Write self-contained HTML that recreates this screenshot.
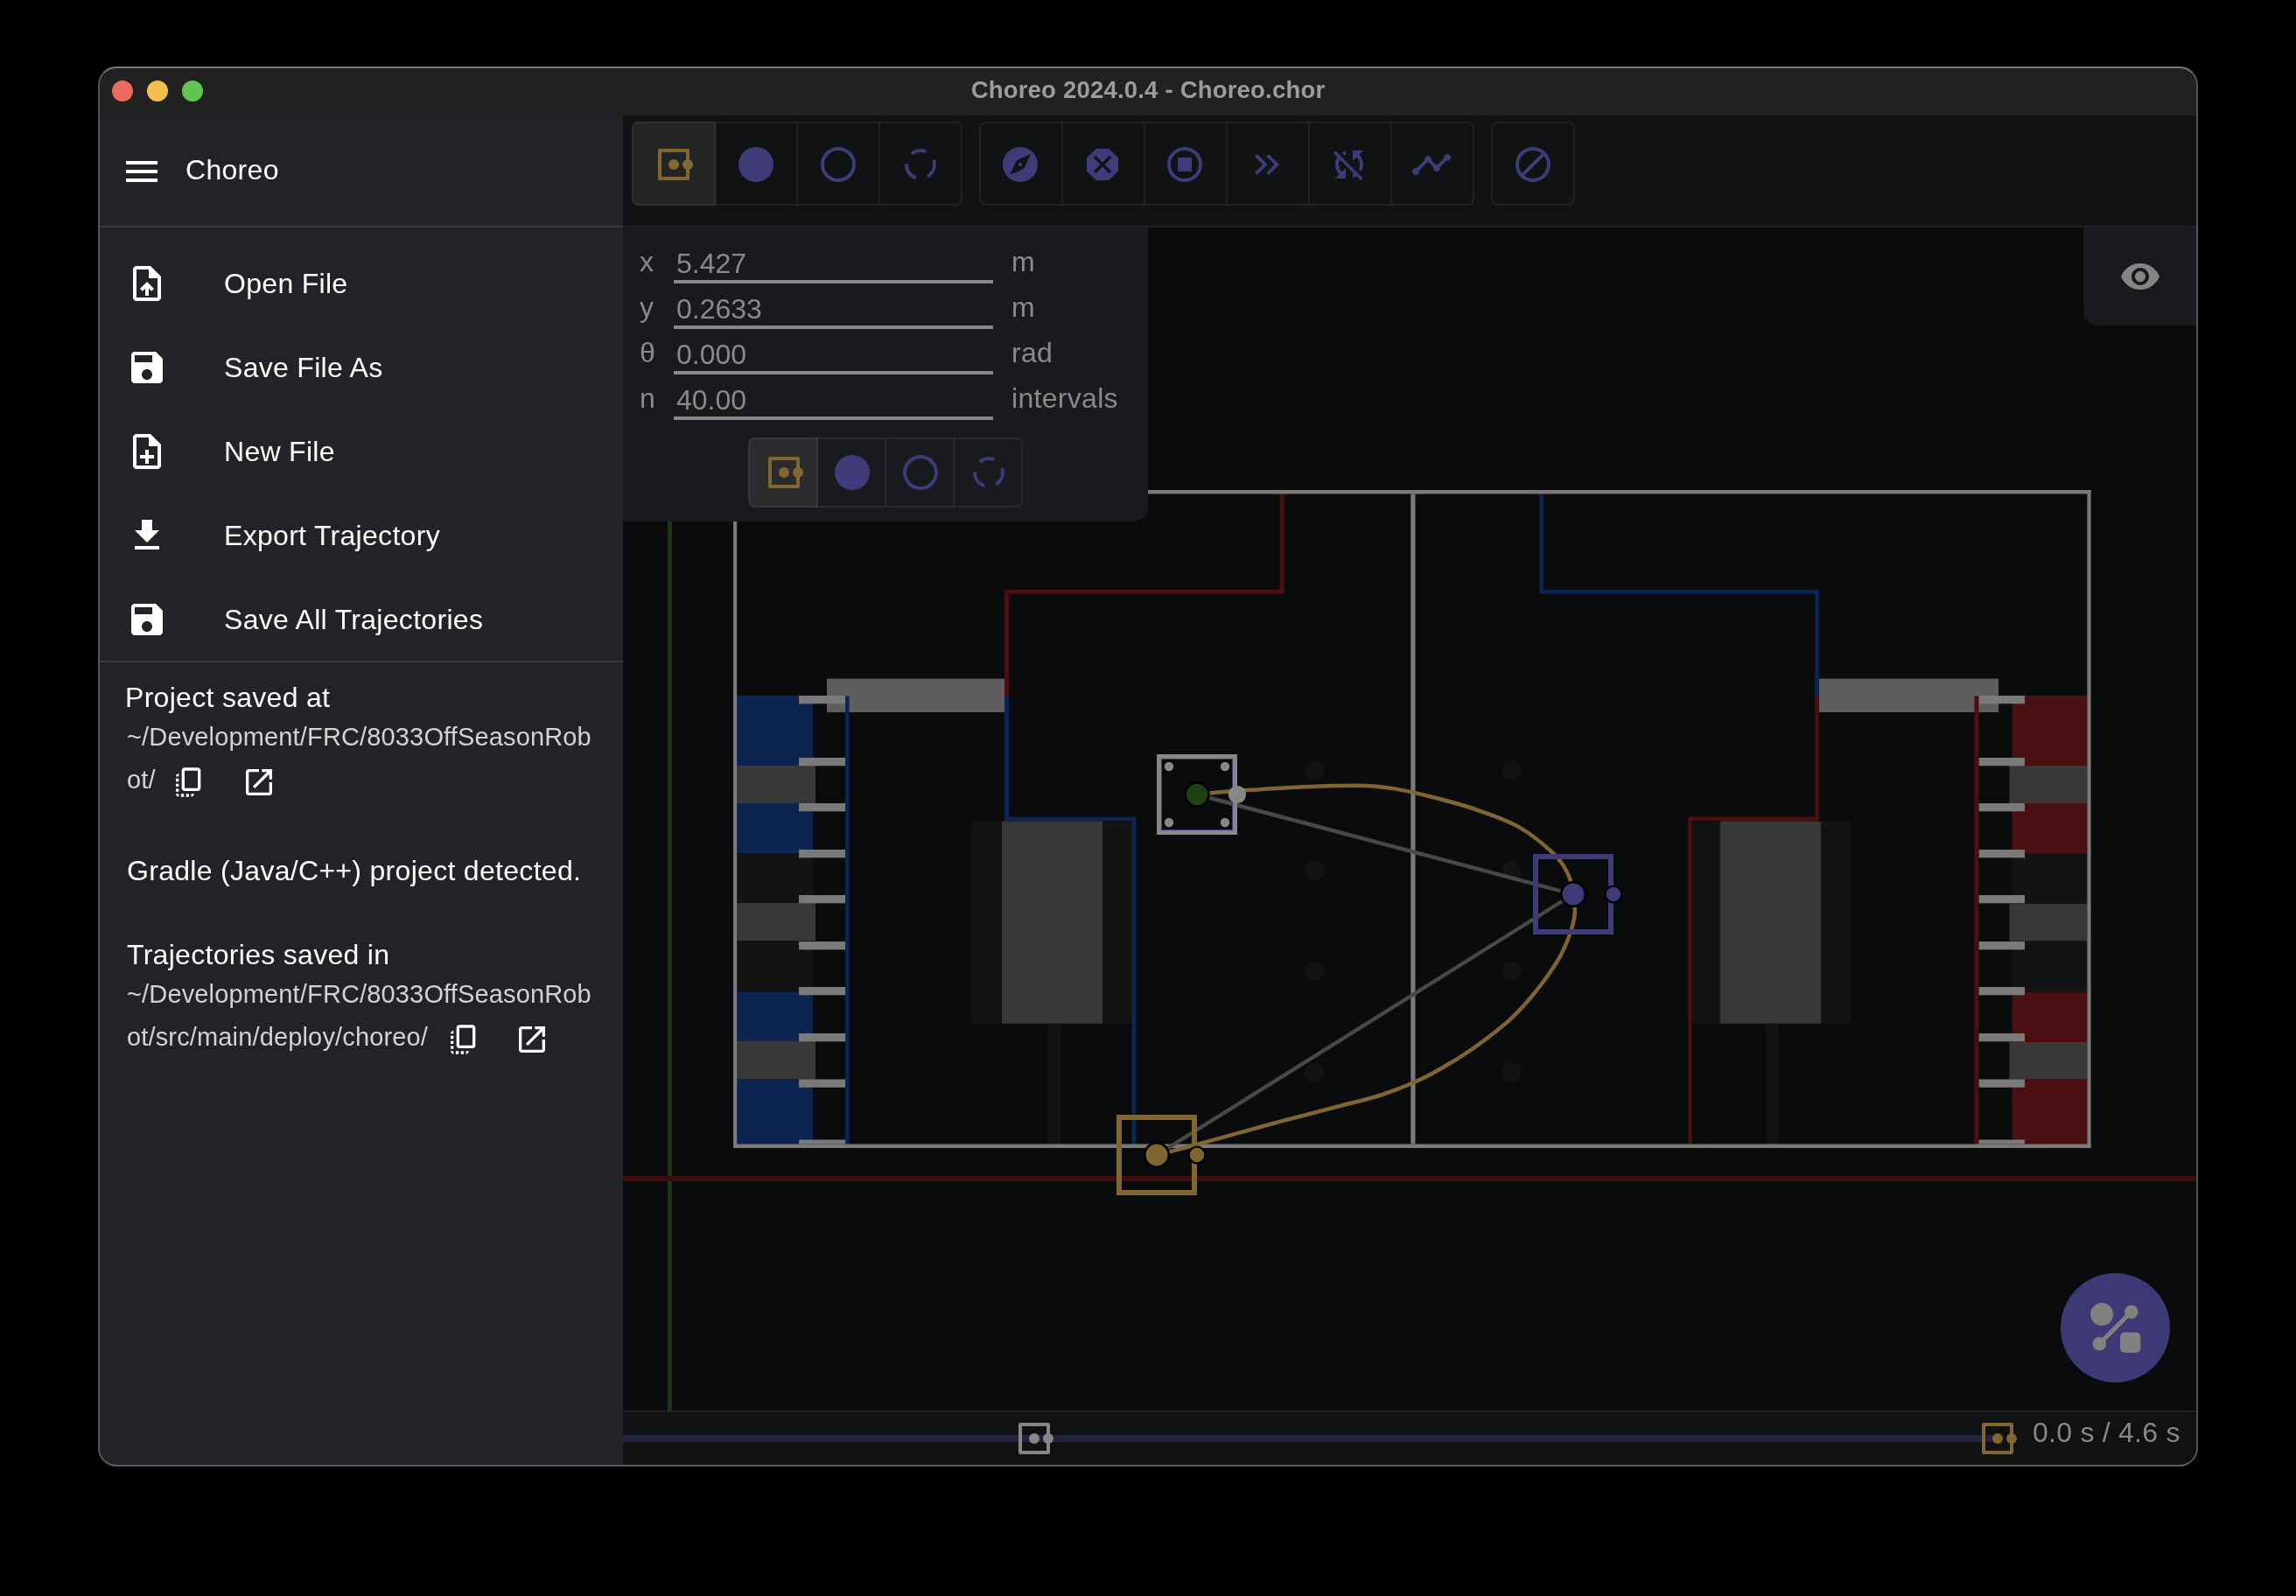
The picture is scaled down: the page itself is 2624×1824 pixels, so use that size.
<!DOCTYPE html>
<html><head><meta charset="utf-8">
<style>
html,body{margin:0;padding:0;background:#000;width:2624px;height:1824px;overflow:hidden;}
body{font-family:"Liberation Sans",sans-serif;position:relative;}
.win{position:absolute;left:112px;top:76px;width:2400px;height:1600px;border-radius:21px;overflow:hidden;background:#222327;}
.pg{position:absolute;left:-112px;top:-76px;width:2624px;height:1824px;}
.frame{position:absolute;left:112px;top:76px;width:2400px;height:1600px;border-radius:21px;box-sizing:border-box;border:2px solid #525355;border-top-color:#767676;border-bottom-color:#5a5b5e;pointer-events:none;}
.a{position:absolute;white-space:nowrap;}
.t{position:absolute;white-space:nowrap;line-height:1;will-change:transform;}
svg{position:absolute;overflow:visible;}
</style></head><body>
<div class="win"><div class="pg">

<!-- title bar -->
<div class="a" style="left:112px;top:76px;width:2400px;height:56px;background:#212121;"></div>
<div class="a" style="left:128px;top:92px;width:24px;height:24px;border-radius:50%;background:#ec6a5e;"></div>
<div class="a" style="left:168px;top:92px;width:24px;height:24px;border-radius:50%;background:#f4bf4f;"></div>
<div class="a" style="left:208px;top:92px;width:24px;height:24px;border-radius:50%;background:#61c554;"></div>
<div class="t" style="left:1012px;width:600px;text-align:center;top:89px;font-size:27.5px;font-weight:bold;color:#9c9c9c;letter-spacing:0.2px;">Choreo 2024.0.4 - Choreo.chor</div>

<!-- sidebar -->
<div class="a" style="left:112px;top:132px;width:600px;height:1544px;background:#222327;"></div>
<svg style="left:138px;top:172px" width="48" height="48" viewBox="0 0 24 24"><path fill="#fff" d="M3 18h18v-2H3v2zm0-5h18v-2H3v2zm0-7v2h18V6H3z"/></svg>
<div class="t" style="left:212px;top:178px;font-size:32px;color:#fff;letter-spacing:0.3px;">Choreo</div>
<div class="a" style="left:112px;top:258px;width:600px;height:2px;background:#3a3b3f;"></div>

<svg style="left:144px;top:300px" width="48" height="48" viewBox="0 0 24 24"><path fill="#fff" d="M14 2H6c-1.1 0-1.99.9-1.99 2L4 20c0 1.1.89 2 1.99 2H18c1.1 0 2-.9 2-2V8l-6-6zm4 18H6V4h7v5h5v11zM8 15.01l1.41 1.41L11 14.84V19h2v-4.16l1.59 1.59L16 15.01 12.01 11 8 15.01z"/></svg>
<div class="t" style="left:256px;top:307.5px;font-size:32px;color:#fff;letter-spacing:0.3px;">Open File</div>
<svg style="left:144px;top:396px" width="48" height="48" viewBox="0 0 24 24"><path fill="#fff" d="M17 3H5c-1.11 0-2 .9-2 2v14c0 1.1.89 2 2 2h14c1.1 0 2-.9 2-2V7l-4-4zm-5 16c-1.66 0-3-1.34-3-3s1.34-3 3-3 3 1.34 3 3-1.34 3-3 3zm3-10H5V5h10v4z"/></svg>
<div class="t" style="left:256px;top:403.5px;font-size:32px;color:#fff;letter-spacing:0.3px;">Save File As</div>
<svg style="left:144px;top:492px" width="48" height="48" viewBox="0 0 24 24"><path fill="#fff" d="M13 11h-2v3H8v2h3v3h2v-3h3v-2h-3zm1-9H6c-1.1 0-2 .9-2 2v16c0 1.1.89 2 1.99 2H18c1.1 0 2-.9 2-2V8l-6-6zm4 18H6V4h7v5h5v11z"/></svg>
<div class="t" style="left:256px;top:499.5px;font-size:32px;color:#fff;letter-spacing:0.3px;">New File</div>
<svg style="left:144px;top:588px" width="48" height="48" viewBox="0 0 24 24"><path fill="#fff" d="M5 20h14v-2H5v2zM19 9h-4V3H9v6H5l7 7 7-7z"/></svg>
<div class="t" style="left:256px;top:595.5px;font-size:32px;color:#fff;letter-spacing:0.3px;">Export Trajectory</div>
<svg style="left:144px;top:684px" width="48" height="48" viewBox="0 0 24 24"><path fill="#fff" d="M17 3H5c-1.11 0-2 .9-2 2v14c0 1.1.89 2 2 2h14c1.1 0 2-.9 2-2V7l-4-4zm-5 16c-1.66 0-3-1.34-3-3s1.34-3 3-3 3 1.34 3 3-1.34 3-3 3zm3-10H5V5h10v4z"/></svg>
<div class="t" style="left:256px;top:691.5px;font-size:32px;color:#fff;letter-spacing:0.3px;">Save All Trajectories</div>
<div class="a" style="left:112px;top:755px;width:600px;height:2px;background:#3a3b3f;"></div>

<div class="t" style="left:142.5px;top:780.7px;font-size:32px;color:#fff;letter-spacing:0.3px;">Project saved at</div>
<div class="t" style="left:144.5px;top:827.5px;font-size:29px;color:#d2d2d2;letter-spacing:0.15px;">~/Development/FRC/8033OffSeasonRob</div>
<div class="t" style="left:144.5px;top:876.5px;font-size:29px;color:#d2d2d2;letter-spacing:0.15px;">ot/</div>
<svg style="left:196px;top:874px" width="40" height="40" viewBox="0 0 24 24"><path fill="#fff" d="M18 2H9c-1.1 0-2 .9-2 2v12c0 1.1.9 2 2 2h9c1.1 0 2-.9 2-2V4c0-1.1-.9-2-2-2zm0 14H9V4h9v12zM3 15v-2h2v2H3zm0-5.5h2v2H3v-2zM10 20h2v2h-2v-2zm-7-1.5v-2h2v2H3zM5 22c-1.1 0-2-.9-2-2h2v2zm3.5 0h-2v-2h2v2zm5 0v-2h2c0 1.1-.9 2-2 2zM5 6v2H3c0-1.1.9-2 2-2z"/></svg>
<svg style="left:276px;top:874px" width="40" height="40" viewBox="0 0 24 24"><path fill="#fff" d="M19 19H5V5h7V3H5c-1.11 0-2 .9-2 2v14c0 1.1.89 2 2 2h14c1.1 0 2-.9 2-2v-7h-2v7zM14 3v2h3.59l-9.83 9.83 1.41 1.41L19 6.41V10h2V3h-7z"/></svg>

<div class="t" style="left:144.5px;top:979.4px;font-size:32px;color:#fff;letter-spacing:0.3px;">Gradle (Java/C++) project detected.</div>
<div class="t" style="left:144.5px;top:1075.3px;font-size:32px;color:#fff;letter-spacing:0.3px;">Trajectories saved in</div>
<div class="t" style="left:144.5px;top:1121.5px;font-size:29px;color:#d2d2d2;letter-spacing:0.15px;">~/Development/FRC/8033OffSeasonRob</div>
<div class="t" style="left:144.5px;top:1170.5px;font-size:29px;color:#d2d2d2;letter-spacing:0.15px;">ot/src/main/deploy/choreo/</div>
<svg style="left:510px;top:1168px" width="40" height="40" viewBox="0 0 24 24"><path fill="#fff" d="M18 2H9c-1.1 0-2 .9-2 2v12c0 1.1.9 2 2 2h9c1.1 0 2-.9 2-2V4c0-1.1-.9-2-2-2zm0 14H9V4h9v12zM3 15v-2h2v2H3zm0-5.5h2v2H3v-2zM10 20h2v2h-2v-2zm-7-1.5v-2h2v2H3zM5 22c-1.1 0-2-.9-2-2h2v2zm3.5 0h-2v-2h2v2zm5 0v-2h2c0 1.1-.9 2-2 2zM5 6v2H3c0-1.1.9-2 2-2z"/></svg>
<svg style="left:588px;top:1168px" width="40" height="40" viewBox="0 0 24 24"><path fill="#fff" d="M19 19H5V5h7V3H5c-1.11 0-2 .9-2 2v14c0 1.1.89 2 2 2h14c1.1 0 2-.9 2-2v-7h-2v7zM14 3v2h3.59l-9.83 9.83 1.41 1.41L19 6.41V10h2V3h-7z"/></svg>

<!-- MAIN -->
<div class="a" style="left:712px;top:132px;width:1800px;height:126px;background:#111214;"></div>
<div class="a" style="left:712px;top:258px;width:1800px;height:2px;background:#1f2023;"></div>
<div class="a" style="left:712px;top:260px;width:1800px;height:1352px;background:#0a0b0d;"></div>
<div class="a" style="left:722px;top:139px;width:96px;height:96px;box-sizing:border-box;border:2px solid rgba(255,255,255,0.065);border-radius:8px 0 0 8px;background:rgba(255,255,255,0.075);"></div>
<div class="a" style="left:816px;top:139px;width:96px;height:96px;box-sizing:border-box;border:2px solid rgba(255,255,255,0.065);border-left-color:transparent;border-radius:0;"></div>
<div class="a" style="left:910px;top:139px;width:96px;height:96px;box-sizing:border-box;border:2px solid rgba(255,255,255,0.065);border-left-color:transparent;border-radius:0;"></div>
<div class="a" style="left:1004px;top:139px;width:96px;height:96px;box-sizing:border-box;border:2px solid rgba(255,255,255,0.065);border-left-color:transparent;border-radius:0 8px 8px 0;"></div>
<svg style="left:746px;top:164px" width="48" height="48" viewBox="0 0 24 24"><rect x="4" y="4" width="16" height="16" fill="none" stroke="#836730" stroke-width="2" stroke-linejoin="round"/><circle cx="12" cy="12" r="3" fill="#836730"/><circle cx="20" cy="12" r="3" fill="#836730"/></svg>
<svg style="left:840px;top:164px" width="48" height="48" viewBox="0 0 24 24"><circle cx="12" cy="12" r="10" fill="#3f3a78"/></svg>
<svg style="left:934px;top:164px" width="48" height="48" viewBox="0 0 24 24"><circle cx="12" cy="12" r="9" fill="none" stroke="#3f3a78" stroke-width="2"/></svg>
<svg style="left:1028px;top:164px" width="48" height="48" viewBox="0 0 24 24"><path d="M7.526 5.368A8 8 0 0 1 14.472 4.392M19.795 10.200A8 8 0 0 1 16.702 18.472M8.746 19.308A8 8 0 0 1 4.011 12.419" fill="none" stroke="#3f3a78" stroke-width="2" stroke-linecap="round"/></svg>
<div class="a" style="left:1119px;top:139px;width:96px;height:96px;box-sizing:border-box;border:2px solid rgba(255,255,255,0.065);border-radius:8px 0 0 8px;"></div>
<div class="a" style="left:1213px;top:139px;width:96px;height:96px;box-sizing:border-box;border:2px solid rgba(255,255,255,0.065);border-left-color:transparent;border-radius:0;"></div>
<div class="a" style="left:1307px;top:139px;width:96px;height:96px;box-sizing:border-box;border:2px solid rgba(255,255,255,0.065);border-left-color:transparent;border-radius:0;"></div>
<div class="a" style="left:1401px;top:139px;width:96px;height:96px;box-sizing:border-box;border:2px solid rgba(255,255,255,0.065);border-left-color:transparent;border-radius:0;"></div>
<div class="a" style="left:1495px;top:139px;width:96px;height:96px;box-sizing:border-box;border:2px solid rgba(255,255,255,0.065);border-left-color:transparent;border-radius:0;"></div>
<div class="a" style="left:1589px;top:139px;width:96px;height:96px;box-sizing:border-box;border:2px solid rgba(255,255,255,0.065);border-left-color:transparent;border-radius:0 8px 8px 0;"></div>
<svg style="left:1142px;top:164px" width="48" height="48" viewBox="0 0 24 24"><path fill="#3f3a78" d="M12 10.9c-.61 0-1.1.49-1.1 1.1s.49 1.1 1.1 1.1c.61 0 1.1-.49 1.1-1.1s-.49-1.1-1.1-1.1zM12 2C6.48 2 2 6.48 2 12s4.48 10 10 10 10-4.48 10-10S17.52 2 12 2zm2.19 12.19L6 18l3.81-8.19L18 6l-3.81 8.19z"/></svg>
<svg style="left:1236px;top:164px" width="48" height="48" viewBox="0 0 24 24"><path fill="#3f3a78" d="M15.73 3H8.27L3 8.27v7.46L8.27 21h7.46L21 15.73V8.27L15.73 3zM17 15.74 15.74 17 12 13.26 8.26 17 7 15.74 10.74 12 7 8.26 8.26 7 12 10.74 15.74 7 17 8.26 13.26 12 17 15.74z"/></svg>
<svg style="left:1330px;top:164px" width="48" height="48" viewBox="0 0 24 24"><path fill="#3f3a78" d="M12 2C6.48 2 2 6.48 2 12s4.48 10 10 10 10-4.48 10-10S17.52 2 12 2zm0 18c-4.41 0-8-3.59-8-8s3.59-8 8-8 8 3.59 8 8-3.59 8-8 8zm4-4H8V8h8v8z"/></svg>
<svg style="left:1424px;top:164px" width="48" height="48" viewBox="0 0 24 24"><path fill="#3f3a78" d="M6.41 6 5 7.41 9.58 12 5 16.59 6.41 18l6-6zM13 6l-1.41 1.41L16.17 12l-4.58 4.59L13 18l6-6z"/></svg>
<svg style="left:1518px;top:164px" width="48" height="48" viewBox="0 0 24 24"><path fill="#3f3a78" d="M10 6.35V4.26c-.8.21-1.55.54-2.23.96l1.46 1.46c.25-.12.5-.24.77-.33zm-7.14-.94 2.36 2.36C4.45 8.99 4 10.44 4 12c0 2.21.91 4.2 2.36 5.64L4 20h6v-6l-2.24 2.24C6.68 15.15 6 13.66 6 12c0-1 .25-1.94.68-2.77l8.08 8.08c-.25.13-.5.25-.77.34v2.09c.8-.21 1.55-.54 2.23-.96l2.36 2.36 1.27-1.27L4.14 4.14 2.86 5.41zM20 4h-6v6l2.24-2.24C17.32 8.85 18 10.34 18 12c0 1-.25 1.94-.68 2.77l1.46 1.46C19.55 15.01 20 13.56 20 12c0-2.21-.91-4.2-2.36-5.64L20 4z"/></svg>
<svg style="left:1612px;top:164px" width="48" height="48" viewBox="0 0 24 24"><path fill="#3f3a78" d="M23 8c0 1.1-.9 2-2 2-.18 0-.35-.02-.51-.07l-3.56 3.55c.05.16.07.34.07.52 0 1.1-.9 2-2 2s-2-.9-2-2c0-.18.02-.36.07-.52l-2.55-2.55c-.16.05-.34.07-.52.07s-.36-.02-.52-.07l-4.55 4.56c.05.16.07.33.07.51 0 1.1-.9 2-2 2s-2-.9-2-2 .9-2 2-2c.18 0 .35.02.51.07l4.56-4.55C8.02 9.36 8 9.18 8 9c0-1.1.9-2 2-2s2 .9 2 2c0 .18-.02.36-.07.52l2.55 2.55c.16-.05.34-.07.52-.07s.36.02.52.07l3.55-3.56C19.02 8.35 19 8.18 19 8c0-1.1.9-2 2-2s2 .9 2 2z"/></svg>
<div class="a" style="left:1704px;top:139px;width:96px;height:96px;box-sizing:border-box;border:2px solid rgba(255,255,255,0.065);border-radius:8px;"></div>
<svg style="left:1728px;top:164px" width="48" height="48" viewBox="0 0 24 24"><path fill="#3f3a78" d="M12 2C6.48 2 2 6.48 2 12s4.48 10 10 10 10-4.48 10-10S17.52 2 12 2zM4 12c0-4.42 3.58-8 8-8 1.85 0 3.55.63 4.9 1.69L5.69 16.9C4.63 15.55 4 13.85 4 12zm8 8c-1.85 0-3.55-.63-4.9-1.69L18.31 7.1C19.37 8.45 20 10.15 20 12c0 4.42-3.58 8-8 8z"/></svg>
<svg style="left:712px;top:260px" width="1800" height="1352" viewBox="712 260 1800 1352">
<rect x="763" y="260" width="5.00" height="1352.00" fill="#1a3612"/>
<rect x="712" y="1344" width="1800.00" height="6.00" fill="#3e0d0b"/>
<rect x="842" y="795" width="87.00" height="80.00" fill="#0d2350"/>
<rect x="842" y="875" width="90.00" height="43.00" fill="#383838"/>
<rect x="842" y="918" width="87.00" height="57.00" fill="#0d2350"/>
<rect x="842" y="975" width="87.00" height="57.00" fill="#131313"/>
<rect x="842" y="1032" width="90.00" height="43.00" fill="#383838"/>
<rect x="842" y="1075" width="87.00" height="59.00" fill="#131313"/>
<rect x="842" y="1134" width="87.00" height="56.00" fill="#0d2350"/>
<rect x="842" y="1190" width="90.00" height="43.00" fill="#383838"/>
<rect x="842" y="1233" width="87.00" height="74.50" fill="#0d2350"/>
<rect x="2299.7" y="795" width="85.80" height="80.00" fill="#4a0f10"/>
<rect x="2296.4" y="875" width="89.10" height="43.00" fill="#383838"/>
<rect x="2299.7" y="918" width="85.80" height="57.80" fill="#4a0f10"/>
<rect x="2299.7" y="975.8" width="85.80" height="57.20" fill="#131313"/>
<rect x="2296.4" y="1033" width="89.10" height="42.60" fill="#383838"/>
<rect x="2299.7" y="1075.6" width="85.80" height="58.40" fill="#131313"/>
<rect x="2299.7" y="1134" width="85.80" height="57.00" fill="#4a0f10"/>
<rect x="2296.4" y="1191" width="89.10" height="42.60" fill="#383838"/>
<rect x="2299.7" y="1233.6" width="85.80" height="73.90" fill="#4a0f10"/>
<rect x="945" y="775.6" width="203.00" height="38.40" fill="#5e5e5e"/>
<rect x="2078.8" y="775.6" width="205.20" height="38.40" fill="#5e5e5e"/>
<rect x="913" y="795" width="53.00" height="9.30" fill="#7a7a7a"/>
<rect x="2261.4" y="795" width="52.60" height="9.30" fill="#7a7a7a"/>
<rect x="913" y="866" width="53.00" height="9.30" fill="#7a7a7a"/>
<rect x="2261.4" y="866" width="52.60" height="9.30" fill="#7a7a7a"/>
<rect x="913" y="918" width="53.00" height="9.30" fill="#7a7a7a"/>
<rect x="2261.4" y="918" width="52.60" height="9.30" fill="#7a7a7a"/>
<rect x="913" y="971" width="53.00" height="9.30" fill="#7a7a7a"/>
<rect x="2261.4" y="971" width="52.60" height="9.30" fill="#7a7a7a"/>
<rect x="913" y="1023" width="53.00" height="9.30" fill="#7a7a7a"/>
<rect x="2261.4" y="1023" width="52.60" height="9.30" fill="#7a7a7a"/>
<rect x="913" y="1076" width="53.00" height="9.30" fill="#7a7a7a"/>
<rect x="2261.4" y="1076" width="52.60" height="9.30" fill="#7a7a7a"/>
<rect x="913" y="1128" width="53.00" height="9.30" fill="#7a7a7a"/>
<rect x="2261.4" y="1128" width="52.60" height="9.30" fill="#7a7a7a"/>
<rect x="913" y="1181" width="53.00" height="9.30" fill="#7a7a7a"/>
<rect x="2261.4" y="1181" width="52.60" height="9.30" fill="#7a7a7a"/>
<rect x="913" y="1233.5" width="53.00" height="9.30" fill="#7a7a7a"/>
<rect x="2261.4" y="1233.5" width="52.60" height="9.30" fill="#7a7a7a"/>
<rect x="913" y="1302.5" width="53.00" height="5.00" fill="#7a7a7a"/>
<rect x="2261.4" y="1302.5" width="52.60" height="5.00" fill="#7a7a7a"/>
<rect x="966" y="795.5" width="4.60" height="512.00" fill="#0d2350"/>
<rect x="2256.4" y="795.5" width="5.00" height="512.00" fill="#4a1010"/>
<rect x="1111" y="938.6" width="183.00" height="231.20" fill="#131313"/>
<rect x="1145" y="938.6" width="115.00" height="231.20" fill="#383838"/>
<rect x="1197.7" y="1169.8" width="14.50" height="137.70" fill="#131313"/>
<rect x="1933.5" y="938.6" width="181.20" height="231.20" fill="#131313"/>
<rect x="1965.8" y="938.6" width="115.20" height="231.20" fill="#383838"/>
<rect x="2018.2" y="1169.8" width="14.30" height="137.70" fill="#131313"/>
<rect x="1462.8" y="564.5" width="5.00" height="114.10" fill="#4a1010"/>
<rect x="1148" y="674" width="319.80" height="4.60" fill="#4a1010"/>
<rect x="1148" y="674" width="5.00" height="121.00" fill="#4a1010"/>
<rect x="1148" y="795" width="5.00" height="143.20" fill="#0d2350"/>
<rect x="1148" y="933.6" width="150.30" height="4.60" fill="#0d2350"/>
<rect x="1293.6" y="933.6" width="4.70" height="373.90" fill="#0d2350"/>
<rect x="1759.4" y="564.5" width="4.80" height="114.10" fill="#0d2350"/>
<rect x="1759.4" y="674" width="319.40" height="4.60" fill="#0d2350"/>
<rect x="2074.2" y="674" width="4.60" height="121.00" fill="#0d2350"/>
<rect x="2074.2" y="795" width="4.60" height="143.00" fill="#4a1010"/>
<rect x="1929.1" y="933.6" width="149.70" height="4.40" fill="#4a1010"/>
<rect x="1929.1" y="933.6" width="4.40" height="373.40" fill="#4a1010"/>
<rect x="1612.3" y="564.5" width="5.20" height="743.00" fill="#7a7a7a"/>
<rect x="838" y="560" width="1551.60" height="4.50" fill="#7a7a7a"/>
<rect x="838" y="1307.5" width="1551.60" height="4.50" fill="#7a7a7a"/>
<rect x="838" y="560.5" width="4.20" height="751.50" fill="#7a7a7a"/>
<rect x="2385.4" y="560.5" width="4.20" height="751.50" fill="#7a7a7a"/>
<circle cx="1502.5" cy="880.7" r="11" fill="#131313"/>
<circle cx="1502.5" cy="994.7" r="11" fill="#131313"/>
<circle cx="1502.5" cy="1110" r="11" fill="#131313"/>
<circle cx="1502.5" cy="1225.2" r="11" fill="#131313"/>
<circle cx="1727.5" cy="880.7" r="11" fill="#131313"/>
<circle cx="1727.5" cy="994.7" r="11" fill="#131313"/>
<circle cx="1727.5" cy="1110" r="11" fill="#131313"/>
<circle cx="1727.5" cy="1225.2" r="11" fill="#131313"/>
<path d="M1368 908C1374.00 907.42 1392.00 905.45 1404 904.5C1416.00 903.55 1426.30 903.15 1440 902.3C1453.70 901.45 1467.47 900.17 1486.2 899.4C1504.93 898.63 1534.47 897.37 1552.4 897.7C1570.33 898.03 1580.00 899.27 1593.8 901.4C1607.60 903.53 1620.03 906.65 1635.2 910.5C1650.37 914.35 1668.25 918.85 1684.8 924.5C1701.35 930.15 1719.33 935.83 1734.5 944.4C1749.67 952.97 1766.15 966.63 1775.8 975.9C1785.45 985.17 1788.70 992.32 1792.4 1000C1796.10 1007.68 1796.78 1014.67 1798 1022C1799.22 1029.33 1800.28 1036.57 1799.7 1044C1799.12 1051.43 1797.45 1058.13 1794.5 1066.6C1791.55 1075.07 1788.25 1084.08 1782 1094.8C1775.75 1105.52 1766.13 1119.40 1757 1130.9C1747.87 1142.40 1738.70 1153.12 1727.2 1163.8C1715.70 1174.48 1699.75 1186.38 1688 1195C1676.25 1203.62 1667.67 1208.95 1656.7 1215.5C1645.73 1222.05 1635.27 1228.30 1622.2 1234.3C1609.13 1240.30 1593.45 1246.55 1578.3 1251.5C1563.15 1256.45 1549.52 1259.22 1531.3 1264C1513.08 1268.78 1490.88 1274.35 1469 1280.2C1447.12 1286.05 1416.83 1294.50 1400 1299.1C1383.17 1303.70 1378.55 1304.92 1368 1307.8C1357.45 1310.68 1344.37 1314.37 1336.7 1316.4C1329.03 1318.43 1324.45 1319.40 1322 1320" fill="none" stroke="#7f6630" stroke-width="4.5" stroke-linejoin="round"/>
<polyline points="1368,908 1798,1022 1322,1320" fill="none" stroke="#484848" stroke-width="4.4"/>
<rect x="1324.5" y="864.5" width="87" height="87" fill="none" stroke="#878787" stroke-width="5"/>
<rect x="1327.5" y="867.5" width="81" height="81" fill="none" stroke="#3f3a78" stroke-width="1"/>
<circle cx="1336" cy="876" r="5.2" fill="#878787"/>
<circle cx="1336" cy="940" r="5.2" fill="#878787"/>
<circle cx="1400" cy="876" r="5.2" fill="#878787"/>
<circle cx="1400" cy="940" r="5.2" fill="#878787"/>
<circle cx="1368" cy="908" r="13.5" fill="#1e4112" stroke="#000" stroke-width="2.6"/>
<circle cx="1414" cy="908" r="10.1" fill="#878787"/>
<rect x="1755" y="979" width="86" height="86" fill="none" stroke="#3f3a78" stroke-width="6"/>
<circle cx="1798" cy="1022" r="13.8" fill="#3f3a78" stroke="#000" stroke-width="2.6"/>
<circle cx="1844" cy="1022" r="9.4" fill="#3f3a78" stroke="#000" stroke-width="2.2"/>
<rect x="1279" y="1277" width="86" height="86" fill="none" stroke="#7f6630" stroke-width="6"/>
<circle cx="1322" cy="1320" r="13.8" fill="#7f6630" stroke="#000" stroke-width="2.6"/>
<circle cx="1368" cy="1320" r="9.4" fill="#7f6630" stroke="#000" stroke-width="2.2"/>
</svg>
<div class="a" style="left:712px;top:260px;width:600px;height:336px;background:#191a1d;border-bottom-right-radius:17px;"></div>
<div class="t" style="left:731px;top:282.9px;font-size:32px;color:#8a8a8a;">x</div>
<div class="t" style="left:773px;top:284.9px;font-size:32px;color:#8a8a8a;">5.427</div>
<div class="t" style="left:1156px;top:282.9px;font-size:32px;color:#8a8a8a;letter-spacing:0.3px;">m</div>
<div class="a" style="left:770px;top:320px;width:365px;height:4px;background:#888;"></div>
<div class="t" style="left:731px;top:334.9px;font-size:32px;color:#8a8a8a;">y</div>
<div class="t" style="left:773px;top:336.9px;font-size:32px;color:#8a8a8a;">0.2633</div>
<div class="t" style="left:1156px;top:334.9px;font-size:32px;color:#8a8a8a;letter-spacing:0.3px;">m</div>
<div class="a" style="left:770px;top:372px;width:365px;height:4px;background:#888;"></div>
<div class="t" style="left:731px;top:386.9px;font-size:32px;color:#8a8a8a;">θ</div>
<div class="t" style="left:773px;top:388.9px;font-size:32px;color:#8a8a8a;">0.000</div>
<div class="t" style="left:1156px;top:386.9px;font-size:32px;color:#8a8a8a;letter-spacing:0.3px;">rad</div>
<div class="a" style="left:770px;top:424px;width:365px;height:4px;background:#888;"></div>
<div class="t" style="left:731px;top:438.9px;font-size:32px;color:#8a8a8a;">n</div>
<div class="t" style="left:773px;top:440.9px;font-size:32px;color:#8a8a8a;">40.00</div>
<div class="t" style="left:1156px;top:438.9px;font-size:32px;color:#8a8a8a;letter-spacing:0.3px;">intervals</div>
<div class="a" style="left:770px;top:476px;width:365px;height:4px;background:#888;"></div>
<div class="a" style="left:855px;top:500px;width:80px;height:80px;box-sizing:border-box;border:2px solid rgba(255,255,255,0.065);border-radius:8px 0 0 8px;background:rgba(255,255,255,0.075);"></div>
<div class="a" style="left:933px;top:500px;width:80px;height:80px;box-sizing:border-box;border:2px solid rgba(255,255,255,0.065);border-left-color:transparent;border-radius:0;"></div>
<div class="a" style="left:1011px;top:500px;width:80px;height:80px;box-sizing:border-box;border:2px solid rgba(255,255,255,0.065);border-left-color:transparent;border-radius:0;"></div>
<div class="a" style="left:1089px;top:500px;width:80px;height:80px;box-sizing:border-box;border:2px solid rgba(255,255,255,0.065);border-left-color:transparent;border-radius:0 8px 8px 0;"></div>
<svg style="left:872px;top:516px" width="48" height="48" viewBox="0 0 24 24"><rect x="4" y="4" width="16" height="16" fill="none" stroke="#836730" stroke-width="2" stroke-linejoin="round"/><circle cx="12" cy="12" r="3" fill="#836730"/><circle cx="20" cy="12" r="3" fill="#836730"/></svg>
<svg style="left:950px;top:516px" width="48" height="48" viewBox="0 0 24 24"><circle cx="12" cy="12" r="10" fill="#3f3a78"/></svg>
<svg style="left:1028px;top:516px" width="48" height="48" viewBox="0 0 24 24"><circle cx="12" cy="12" r="9" fill="none" stroke="#3f3a78" stroke-width="2"/></svg>
<svg style="left:1106px;top:516px" width="48" height="48" viewBox="0 0 24 24"><path d="M7.526 5.368A8 8 0 0 1 14.472 4.392M19.795 10.200A8 8 0 0 1 16.702 18.472M8.746 19.308A8 8 0 0 1 4.011 12.419" fill="none" stroke="#3f3a78" stroke-width="2" stroke-linecap="round"/></svg>
<div class="a" style="left:2381px;top:260px;width:131px;height:112px;background:#191a1d;border-bottom-left-radius:18px;"></div>
<svg style="left:2422px;top:292px" width="48" height="48" viewBox="0 0 24 24"><path fill="#868686" d="M12 4.5C7 4.5 2.73 7.61 1 12c1.73 4.39 6 7.5 11 7.5s9.27-3.11 11-7.5c-1.73-4.39-6-7.5-11-7.5zM12 17c-2.76 0-5-2.24-5-5s2.24-5 5-5 5 2.24 5 5-2.24 5-5 5zm0-8c-1.66 0-3 1.34-3 3s1.34 3 3 3 3-1.34 3-3-1.34-3-3-3z"/></svg>
<div class="a" style="left:2355px;top:1455px;width:125px;height:125px;border-radius:50%;background:#3e3874;"></div>
<svg style="left:2355px;top:1455px" width="125" height="125" viewBox="2355 1455 125 125"><circle cx="2402.1" cy="1502" r="13" fill="#818181"/><circle cx="2435.8" cy="1499.3" r="7.8" fill="#818181"/><circle cx="2399.3" cy="1535.8" r="7.8" fill="#818181"/><line x1="2399.3" y1="1535.8" x2="2435.8" y2="1499.3" stroke="#818181" stroke-width="5"/><rect x="2423" y="1522.7" width="23.3" height="23.3" rx="5" fill="#818181"/></svg>
<div class="a" style="left:712px;top:1612px;width:1800px;height:2px;background:#1f2022;"></div>
<div class="a" style="left:712px;top:1614px;width:1800px;height:62px;background:#101113;"></div>
<div class="a" style="left:712px;top:1640px;width:1571px;height:8px;background:#23223c;"></div>
<svg style="left:1158px;top:1620px" width="48" height="48" viewBox="0 0 24 24"><rect x="4" y="4" width="16" height="16" fill="none" stroke="#868686" stroke-width="2" stroke-linejoin="round"/><circle cx="12" cy="12" r="3" fill="#868686"/><circle cx="20" cy="12" r="3" fill="#868686"/></svg>
<svg style="left:2259px;top:1620px" width="48" height="48" viewBox="0 0 24 24"><rect x="4" y="4" width="16" height="16" fill="none" stroke="#836730" stroke-width="2" stroke-linejoin="round"/><circle cx="12" cy="12" r="3" fill="#836730"/><circle cx="20" cy="12" r="3" fill="#836730"/></svg>
<div class="t" style="left:2323px;top:1620.9px;font-size:32px;color:#878787;letter-spacing:0.25px;">0.0 s / 4.6 s</div>
</div></div>
<div class="frame"></div>
</body></html>
